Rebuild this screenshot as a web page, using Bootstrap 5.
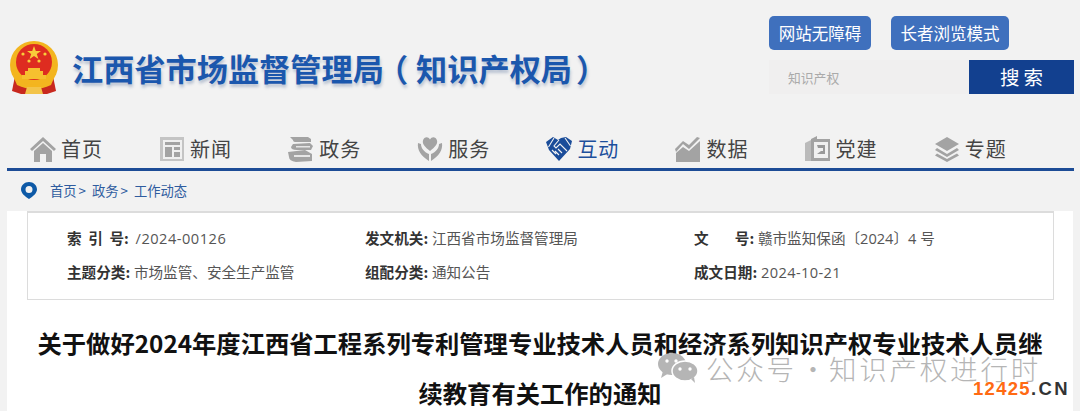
<!DOCTYPE html>
<html lang="zh-CN">
<head>
    <meta charset="UTF-8">
    <meta name="viewport" content="width=device-width, initial-scale=1.0">
    <title>江西省市场监督管理局（知识产权局）</title>
    <link href="https://cdn.jsdelivr.net/npm/bootstrap@5.3.2/dist/css/bootstrap.min.css" rel="stylesheet">
    <style>
        html, body { height: 411px; overflow: hidden; }
        body { background-color: #f2f2f2; font-family: "Liberation Sans", "Noto Sans CJK SC", sans-serif; position: relative; }
        .page-wrap { width: 1073px; padding-left: 7px; }
        .site-head { height: 130px; }
        .brand-side { padding-top: 41px; padding-left: 2px; }
        .brand-name { font-family: "Noto Sans CJK SC", sans-serif; font-size: 31.2px; font-weight: 700; color: #1b57ad; margin-left: 13px; line-height: 50px; text-shadow: 1px 3px 3px rgba(60,90,140,.3); white-space: nowrap; }
        .paren-l { margin-left: -7px; margin-right: 8px; }
        .paren-r { margin-left: 4px; }
        .tool-side { width: 305px; padding-top: 16px; margin-right: -1px; }
        .tool-btn { background: #3f70bd; border: 0; color: #fff; font-size: 16.5px; height: 34px; line-height: 34px; padding: 0; border-radius: 5px; font-family: "Noto Sans CJK SC", sans-serif; }
        .tool-a { width: 102px; margin-right: 20px; }
        .tool-b { width: 118px; }
        .search-box { margin-top: 10px; height: 34px; }
        .search-input { width: 200px; height: 34px; background: #f0efef; border: 0; border-radius: 0; font-size: 12.8px; padding: 0 19px; color: #999; font-family: "Noto Sans CJK SC", sans-serif; }
        .search-input::placeholder { color: #aaa; }
        .search-btn { width: 105px; height: 34px; background: #12408f; color: #fff; border: 0; border-radius: 0; font-size: 19.5px; line-height: 34px; padding: 0 0 0 4px; font-family: "Noto Sans CJK SC", sans-serif; letter-spacing: 4px; }
        .main-nav { height: 41px; border-bottom: 3px solid #1d4c96; padding-left: 23px; margin-right: -1px; }
        .main-nav a { width: 129.1px; height: 38px; color: #444; text-decoration: none; font-family: "Noto Sans CJK SC", sans-serif; font-size: 20px; letter-spacing: 1px; line-height: 38px; }
        .main-nav a svg { width: 26px; height: 26px; margin-right: 5px; flex: none; }
        .main-nav a.on { color: #1d4f9c; }
        .crumb-row { height: 40px; padding-left: 14px; padding-bottom: 1px; font-size: 13.3px; color: #2f5c9f; font-family: "Noto Sans CJK SC", sans-serif; }
        .crumb-row svg { width: 16px; height: 17px; margin-right: 13px; }
        .crumb-sep { margin: 0 6px 0 2px; }
        .white-sheet { background: #fff; height: 200px; padding: 0 20px; }
        .meta-box { height: 89px; border: 1px solid #dcdcdc; border-top-width: 2px; padding: 8px 0 0 39px; margin-right: -1px; font-size: 14.6px; color: #555; font-family: "Open Sans", "Noto Sans CJK SC", sans-serif; }
        .meta-line { height: 34px; line-height: 34px; }
        .meta-line b { color: #333; font-weight: 700; font-family: "Noto Sans CJK SC", sans-serif; }
        .meta-num { letter-spacing: .4px; }
        .meta-idx { letter-spacing: .5px; margin-left: 3px; }
        .meta-wen { letter-spacing: -1px; }
        .cell-a { width: 298px; }
        .cell-b { width: 329px; }
        .doc-title { font-family: "Noto Sans CJK SC", sans-serif; font-size: 24.3px; font-weight: 700; line-height: 50px; color: #111; margin: 18px 0 0; padding: 0 5px; text-align: center; }
        .wx-mark { position: absolute; left: 657px; top: 350px; color: #b5b5b5; font-family: "Noto Sans CJK SC", sans-serif; font-size: 27.5px; font-weight: 300; letter-spacing: 2.800px; line-height: 36px; white-space: nowrap; }
        .wx-mark svg { width: 42px; height: 30px; margin-right: 7px; }
        .wx-dot { width: 32px; text-align: center; letter-spacing: 0; }
        .site-stamp { position: absolute; left: 973px; top: 377px; font-family: "Liberation Sans", sans-serif; font-weight: 700; font-size: 18.5px; line-height: 24px; letter-spacing: 2.400px; color: #333; }
        .site-stamp span { color: #ff6a13; letter-spacing: 1.300px; }
    </style>
</head>
<body>
    <div class="page-wrap">
        <!-- header -->
        <div class="site-head d-flex justify-content-between">
            <div class="brand-side d-flex align-items-center align-self-start">
                <svg width="50" height="54" viewBox="0 0 50 54">
                    <path d="M6 35 L3 50 L12 53 H38 L47 50 L44 35Z" fill="#c8281e"/>
                    <circle cx="25" cy="24" r="24" fill="#f3b51f"/>
                    <circle cx="25" cy="21" r="18" fill="#de2c20"/>
                    <polygon points="25,5 26.800,10 32,10 27.800,13 29.400,18 25,15 20.600,18 22.200,13 18,10 23.200,10" fill="#f8cd3a"/>
                    <circle cx="14" cy="13" r="1.600" fill="#f8cd3a"/><circle cx="36" cy="13" r="1.600" fill="#f8cd3a"/>
                    <circle cx="20" cy="20" r="1.600" fill="#f8cd3a"/><circle cx="30" cy="20" r="1.600" fill="#f8cd3a"/>
                    <path d="M13 34 H37 V38 H13Z M16 30 H34 V34 H16Z M19 27 H31 V30 H19Z" fill="#f6c02f"/>
                    <path d="M5 37 Q25 50 45 37 L42 44 Q25 52 8 44Z" fill="#f3b51f"/>
                    <path d="M18 46 H32 L34 53 H16Z" fill="#f3c44a"/>
                </svg>
                <div class="brand-name">江西省市场监督管理局<span class="paren-l">（</span>知识产权局<span class="paren-r">）</span></div>
            </div>
            <div class="tool-side">
                <div class="d-flex">
                    <button class="btn tool-btn tool-a" type="button">网站无障碍</button>
                    <button class="btn tool-btn tool-b" type="button">长者浏览模式</button>
                </div>
                <div class="search-box d-flex">
                    <input class="form-control search-input" type="text" placeholder="知识产权">
                    <button class="btn search-btn" type="button">搜索</button>
                </div>
            </div>
        </div>

        <!-- nav -->
        <nav class="main-nav d-flex">
            <a class="d-flex align-items-center" href="#">
                <svg viewBox="0 0 26 26" fill="#a3a3a3"><path d="M13 1 L26 13 L24 15 L13 5 L2 15 L0 13Z"/><path d="M4 15 L13 7 L22 15 V26 H16 V18 H10 V26 H4Z"/></svg>首页</a>
            <a class="d-flex align-items-center" href="#">
                <svg viewBox="0 0 26 26"><rect x="1" y="1" width="24" height="24" fill="#c4c4c4"/><rect x="4" y="4" width="19" height="19" fill="#f0f0f0"/><rect x="6" y="6" width="15" height="3" fill="#a3a3a3"/><rect x="6" y="11" width="7" height="10" fill="#a3a3a3"/><rect x="15" y="11" width="6" height="3" fill="#a3a3a3"/><rect x="15" y="16" width="6" height="5" fill="#a3a3a3"/></svg>新闻</a>
            <a class="d-flex align-items-center" href="#">
                <svg viewBox="0 0 26 26" fill="#a3a3a3"><path d="M2 1 H20 L23 3 V6 H8 Q5 6 5 4 Z"/><path d="M5 8 L22 7 L25 10 L23 14 H9 Q3 14 3 11Z"/><path d="M8 10 H22 V11.500 H8Z" fill="#e6e6e6"/><path d="M0 16 L17 14 L24 18 V25 L8 26 Q1 25 1 21Z"/><path d="M6 19 H22 V21 H6Z" fill="#e6e6e6"/></svg>政务</a>
            <a class="d-flex align-items-center" href="#">
                <svg viewBox="0 0 26 26" fill="#a3a3a3"><path d="M13 15 C8 11 5 8 6 4.500 C7 1 11 0 13 3.500 C15 0 19 1 20 4.500 C21 8 18 11 13 15Z"/><path d="M1 7 C0 14 4 20 12 25 V18 C7 16 4 12 4 8Z"/><path d="M25 7 C26 14 22 20 14 25 V18 C19 16 22 12 22 8Z"/></svg>服务</a>
            <a class="on d-flex align-items-center" href="#">
                <svg viewBox="0 0 26 26"><path fill="#1a4c99" d="M0 6 L7 1 L12 4 L15 2 L20 1 L26 5 L24 13 L13 25 L3 14Z"/><path d="M8 2 L2.500 11 M19 2 L24.500 10 M13 4 L8 10 L10 12 L14 8 L21 15 M9 15 L13 19 M12 13 L16 17 M6 14 L10 18" fill="none" stroke="#f2f2f2" stroke-width="1.100"/></svg>互动</a>
            <a class="d-flex align-items-center" href="#">
                <svg viewBox="0 0 26 26" fill="#a3a3a3"><path d="M1 26 V17 L8 11 L14 15 L25 5 V26Z"/><path d="M0 13 L8 5 L14 9 L22 1 L25 2 L14 13 L8 8 L1 16Z"/></svg>数据</a>
            <a class="d-flex align-items-center" href="#">
                <svg viewBox="0 0 26 26"><path d="M0 7 L8 3 V25 H0Z" fill="#bbb"/><path d="M6 3 L12 0 V3 H25 V25 H6Z" fill="#a3a3a3"/><rect x="9" y="6" width="14" height="16" fill="#f0f0f0"/><path d="M12 9 H20 V18 H12 L16 15 H18 V12 H13Z" fill="#999"/></svg>党建</a>
            <a class="d-flex align-items-center" href="#">
                <svg viewBox="0 0 26 26" fill="#a3a3a3"><path d="M13 1 L25 8 L13 15 L1 8Z"/><path d="M3 12 L13 18 L23 12 L25 14 L13 21 L1 14Z"/><path d="M3 17.500 L13 23 L23 17.500 L25 19.500 L13 26 L1 19.500Z"/></svg>专题</a>
        </nav>

        <!-- breadcrumb -->
        <div class="crumb-row d-flex align-items-center">
            <svg viewBox="0 0 16 17"><path fill-rule="evenodd" fill="#0e5aa7" d="M8 0 C12.500 0 16 3.200 16 7.500 C16 11 12 14.500 8 17 C4 14.500 0 11 0 7.500 C0 3.200 3.500 0 8 0Z M8 4 A3.500 3.500 0 1 0 8 11 A3.500 3.500 0 1 0 8 4Z"/></svg>
            <span>首页<span class="crumb-sep">&gt;</span>政务<span class="crumb-sep">&gt;</span>工作动态</span>
        </div>

        <!-- article -->
        <div class="white-sheet">
            <div class="meta-box">
                <div class="meta-line d-flex">
                    <div class="cell-a"><b>索&nbsp;&nbsp;引&nbsp;&nbsp;号:</b> <span class="meta-idx">/2024-00126</span></div>
                    <div class="cell-b"><b>发文机关:</b> 江西省市场监督管理局</div>
                    <div><b><span class="meta-wen">文&emsp;&emsp;</span>号:</b> 赣市监知保函〔2024〕4 号</div>
                </div>
                <div class="meta-line d-flex">
                    <div class="cell-a"><b>主题分类:</b> 市场监管、安全生产监管</div>
                    <div class="cell-b"><b>组配分类:</b> 通知公告</div>
                    <div><b>成文日期:</b> <span class="meta-num">2024-10-21</span></div>
                </div>
            </div>
            <h1 class="doc-title">关于做好2024年度江西省工程系列专利管理专业技术人员和经济系列知识产权专业技术人员继续教育有关工作的通知</h1>
        </div>
    </div>

    <!-- overlays -->
    <div class="wx-mark d-flex align-items-center">
        <svg viewBox="0 0 42 30" fill="#b5b5b5"><ellipse cx="15" cy="11" rx="14" ry="11"/><path d="M6 18 L4 25 L12 20Z"/><ellipse cx="28" cy="18" rx="13" ry="10" stroke="#fff" stroke-width="1.500"/><path d="M34 26 L38 30 L37 24Z"/><circle cx="23" cy="16" r="1.700" fill="#fff"/><circle cx="33" cy="16" r="1.700" fill="#fff"/><circle cx="10" cy="8" r="1.700" fill="#fff"/><circle cx="19" cy="8" r="1.700" fill="#fff"/></svg>
        <span>公众号</span><span class="wx-dot">·</span><span>知识产权进行时</span>
    </div>
    <div class="site-stamp"><span>12425</span>.CN</div>

    <script src="https://cdn.jsdelivr.net/npm/bootstrap@5.3.2/dist/js/bootstrap.bundle.min.js"></script>
</body>
</html>
